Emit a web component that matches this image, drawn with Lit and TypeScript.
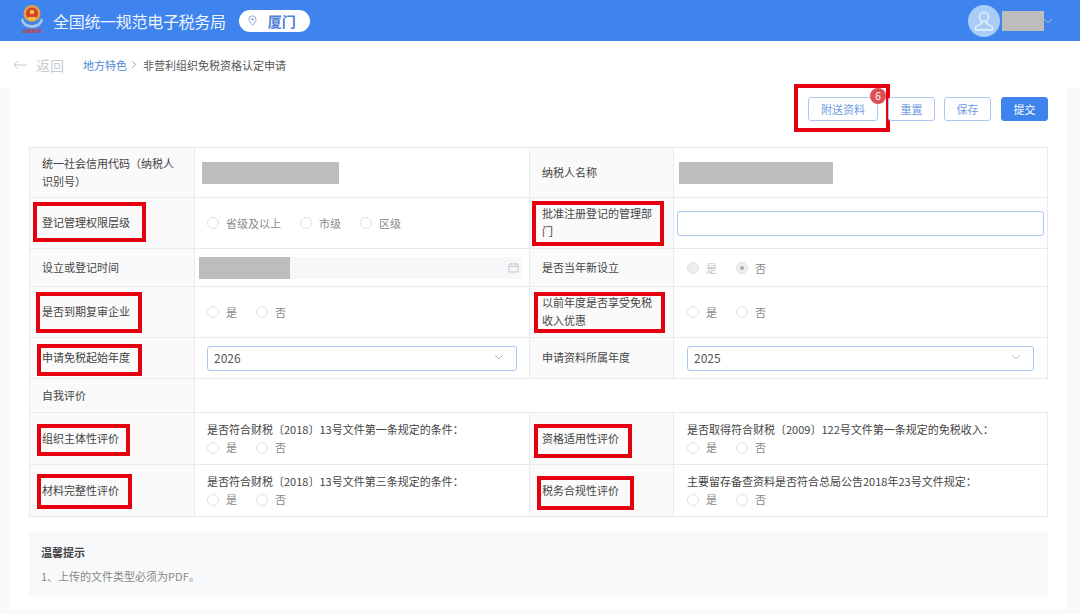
import { LitElement, html, css, nothing } from 'lit';
import { customElement } from 'lit/decorators.js';

// red annotation box, offsets are relative to the label cell
type Mark = { l: number; t: number; w: number; h: number };

const radios = (names: string[], checked = -1, disabled = false) => html`
  <div class="radios ${disabled ? 'disabled' : ''}">
    ${names.map((n, i) => html`
      <span class="radio"><i class="dot ${i === checked ? 'on' : ''}"></i>${n}</span>
    `)}
  </div>
`;

const chevron = html`<svg class="chev" width="10" height="6" viewBox="0 0 10 6"><path d="M1 1l4 4 4-4" fill="none" stroke="#b4bac4" stroke-width="1"/></svg>`;

const select = (v: string) => html`<div class="field select"><span>${v}</span>${chevron}</div>`;

const question = (q: string) => html`<div class="q"><div>${q}</div>${radios(['是', '否'])}</div>`;

const label = (text: string, mark?: Mark) => html`
  <div class="label">
    <span>${text}</span>
    ${mark ? html`<b class="mark" style="left:${mark.l}px;top:${mark.t}px;width:${mark.w}px;height:${mark.h}px"></b>` : nothing}
  </div>
`;

@customElement('app-root')
export class AppRoot extends LitElement {
  static styles = css`
    :host {
      display: block;
      height: 614px;
      overflow: hidden;
      background: #f8f9fa;
      font-family: "Noto Sans CJK SC", "Liberation Sans", sans-serif;
      font-size: 11px;
      color: #444;
    }

    .top {
      height: 41px;
      background: #3f84ee;
      display: flex;
      align-items: center;
      padding: 0 27px 0 21px;
      color: #fff;
    }
    .logo { display: block; margin: 0 10px 6px 0; }
    .title { font-size: 16px; color: #eef4fe; letter-spacing: -0.3px; }
    .city {
      margin-left: 13px;
      width: 71px;
      height: 22px;
      border-radius: 11px;
      background: #fff;
      display: flex;
      align-items: center;
      padding-left: 9px;
      box-sizing: border-box;
      gap: 11px;
      color: #4f7fd6;
      font-size: 14px;
      font-weight: 700;
    }
    .user { margin-left: auto; display: flex; align-items: center; }
    .name { width: 42px; height: 20px; background: #bdbdbd; margin-left: 2px; }
    .user .chev { margin-left: -1px; }

    .crumbs {
      height: 47px;
      background: #fff;
      display: flex;
      align-items: center;
      padding-left: 13px;
    }
    .back { display: flex; align-items: center; gap: 9px; font-size: 14px; color: #c8ccd2; width: 70px; }
    .crumbs a { color: #4f86d8; }
    .crumbs .sep { margin: 0 7px 0 5px; }
    .crumbs .cur { color: #555; }

    .card {
      margin: 0 13px 0 10px;
      height: 522px;
      background: #fff;
      box-sizing: border-box;
      padding: 9px 19px 0;
    }

    .bar { display: flex; justify-content: flex-end; gap: 9px; height: 50px; }
    .btn {
      position: relative;
      height: 24px;
      width: 47px;
      box-sizing: border-box;
      border: 1px solid #a9c8f2;
      border-radius: 3px;
      display: flex;
      align-items: center;
      justify-content: center;
      color: #6c9be0;
      background: #fff;
      font-size: 11px;
    }
    .btn.wide { width: 70px; margin-right: 1px; }
    .btn.primary { background: #3f84ee; border-color: #3f84ee; color: #fff; margin-left: 1px; }
    .badge {
      position: absolute;
      z-index: 1;
      right: -9px;
      top: -10px;
      width: 16px;
      height: 16px;
      border-radius: 50%;
      background: #dc4f55;
      color: #fff;
      font-size: 10px;
      line-height: 16px;
      text-align: center;
    }
    .bar .mark { left: -15px; top: -14px; width: 96px; height: 48px; }

    .grid {
      display: grid;
      grid-template-columns: 165px 335px 144px 374px;
      grid-template-rows: 50px 51px 38px 51px 41px 34px 52px 52px;
      border-top: 1px solid #e8eaed;
      border-left: 1px solid #e8eaed;
    }
    .grid > * {
      border-right: 1px solid #e8eaed;
      border-bottom: 1px solid #e8eaed;
      box-sizing: border-box;
      min-width: 0;
    }
    .label {
      position: relative;
      background: #fafafa;
      display: flex;
      align-items: center;
      padding: 0 12px 2px;
      line-height: 18px;
      color: #444;
    }
    .cell { display: flex; align-items: center; padding: 0 12px; }
    .cell.r { padding: 0 13px; }
    .cell.wide { grid-column: span 3; border-right: none; }
    .cell.date-cell { padding: 0 7px 0 4px; }
    .cell.input-cell { padding: 0 3px; }
    .mark {
      position: absolute;
      box-sizing: border-box;
      border: 4px solid #e4000f;
      pointer-events: none;
    }
    .mask { background: #bdbdbd; height: 22px; }
    .mask.code { width: 137px; margin-left: -5px; }
    .mask.taxpayer { width: 154px; margin-left: -8px; }
    .mask.when { width: 91px; }
    .field {
      box-sizing: border-box;
      height: 25px;
      border: 1px solid #a9c8f2;
      border-radius: 3px;
      background: #fff;
      width: 100%;
    }
    .select {
      display: flex;
      align-items: center;
      justify-content: space-between;
      padding: 0 12px 2px 6px;
      font-size: 12px;
      color: #555;
    }
    .date {
      flex: 1;
      height: 22px;
      background: #f6f7f9;
      border-radius: 3px;
      display: flex;
      align-items: center;
      justify-content: space-between;
      padding-right: 3px;
    }

    .radios { display: flex; gap: 19px; color: #8a8a8a; }
    .radio { display: inline-flex; align-items: center; gap: 7px; }
    .dot {
      width: 12px;
      height: 12px;
      border: 1px solid #dfe2e6;
      border-radius: 50%;
      box-sizing: border-box;
      background: #fff;
      position: relative;
    }
    .disabled .dot { background: #eceef0; }
    .disabled .dot.on::after {
      content: '';
      position: absolute;
      left: 3px;
      top: 3px;
      width: 4px;
      height: 4px;
      border-radius: 50%;
      background: #a8a8a8;
    }
    .disabled .radio:first-child { color: #c4c4c4; }
    .q { line-height: 17px; color: #444; }
    .q .radios { margin-top: 1px; }

    .tips {
      margin-top: 15px;
      height: 65px;
      background: #f7f9fb;
      padding: 12px 12px 0;
      box-sizing: border-box;
      line-height: 17px;
    }
    .tips b { display: block; font-weight: 700; color: #444; margin-bottom: 7px; }
    .tips span { color: #888; }
  `;

  render() {
    return html`
      <header class="top">
        <svg class="logo" width="22" height="30" viewBox="0 0 22 30">
          <path d="M2 15c1 5 5 7 9 7s8-2 9-7l2 2c-1 5-6 8-11 8S1 22 0 17z" fill="#a9c6e6"/>
          <circle cx="11" cy="10.500" r="8.500" fill="#dfa24c"/>
          <circle cx="11" cy="10.500" r="6" fill="#d8402c"/>
          <circle cx="11" cy="9" r="2.200" fill="#f0c24e"/>
          <path d="M7 14h8l-1 3H8z" fill="#f0c24e"/>
          <text x="11" y="29.500" text-anchor="middle" font-size="5" font-weight="700" fill="#c8402e">中国税务</text>
        </svg>
        <span class="title">全国统一规范电子税务局</span>
        <div class="city">
          <svg width="9" height="11" viewBox="0 0 9 11"><path d="M4.500 10.300C2.600 8 1 6.200 1 4.300a3.500 3.500 0 0 1 7 0c0 1.900-1.600 3.700-3.500 6z" fill="none" stroke="#8fa8d4"/><circle cx="4.500" cy="4.300" r="1.200" fill="#8fa8d4"/></svg>
          <span>厦门</span>
        </div>
        <div class="user">
          <svg width="32" height="32" viewBox="0 0 32 32">
            <circle cx="16" cy="16" r="16" fill="#a9cdf7"/>
            <circle cx="16" cy="12" r="4.500" fill="none" stroke="#eaf3fe" stroke-width="1.300"/>
            <path d="M13.500 16.500v2L8.500 21c-1 .5-1 2.500-1 4h17c0-1.500 0-3.500-1-4l-5-2.500v-2" fill="none" stroke="#eaf3fe" stroke-width="1.300"/>
          </svg>
          <div class="name"></div>
          ${chevron}
        </div>
      </header>

      <nav class="crumbs">
        <div class="back">
          <svg width="14" height="10" viewBox="0 0 14 10"><path d="M14 5H1M5 1L1 5l4 4" fill="none" stroke="#c8ccd2" stroke-width="1"/></svg>
          <span>返回</span>
        </div>
        <a>地方特色</a>
        <svg class="sep" width="4" height="7" viewBox="0 0 4 7"><path d="M.5.500l3 3-3 3" fill="none" stroke="#999"/></svg>
        <span class="cur">非营利组织免税资格认定申请</span>
      </nav>

      <main class="card">
        <div class="bar">
          <div class="btn wide">附送资料<b class="mark"></b><span class="badge">6</span></div>
          <div class="btn">重置</div>
          <div class="btn">保存</div>
          <div class="btn primary">提交</div>
        </div>

        <div class="grid">
          ${label('统一社会信用代码（纳税人识别号）')}
          <div class="cell"><div class="mask code"></div></div>
          ${label('纳税人名称')}
          <div class="cell r"><div class="mask taxpayer"></div></div>

          ${label('登记管理权限层级', { l: 3, t: 4, w: 113, h: 40 })}
          <div class="cell">${radios(['省级及以上', '市级', '区级'])}</div>
          ${label('批准注册登记的管理部门', { l: 2, t: 3, w: 132, h: 45 })}
          <div class="cell input-cell"><div class="field"></div></div>

          ${label('设立或登记时间')}
          <div class="cell date-cell">
            <div class="date">
              <div class="mask when"></div>
              <svg width="11" height="11" viewBox="0 0 11 11"><path d="M1 2h9v8H1zM1 4.500h9M3.500 1v2M7.500 1v2" fill="none" stroke="#c4c8ce"/></svg>
            </div>
          </div>
          ${label('是否当年新设立')}
          <div class="cell r">${radios(['是', '否'], 1, true)}</div>

          ${label('是否到期复审企业', { l: 6, t: 5, w: 106, h: 41 })}
          <div class="cell">${radios(['是', '否'])}</div>
          ${label('以前年度是否享受免税收入优惠', { l: 4, t: 5, w: 131, h: 41 })}
          <div class="cell r">${radios(['是', '否'])}</div>

          ${label('申请免税起始年度', { l: 7, t: 6, w: 105, h: 32 })}
          <div class="cell">${select('2026')}</div>
          ${label('申请资料所属年度')}
          <div class="cell r">${select('2025')}</div>

          ${label('自我评价')}
          <div class="cell wide"></div>

          ${label('组织主体性评价', { l: 7, t: 11, w: 93, h: 32 })}
          <div class="cell">${question('是否符合财税〔2018〕13号文件第一条规定的条件：')}</div>
          ${label('资格适用性评价', { l: 4, t: 11, w: 98, h: 34 })}
          <div class="cell r">${question('是否取得符合财税〔2009〕122号文件第一条规定的免税收入：')}</div>

          ${label('材料完整性评价', { l: 7, t: 9, w: 95, h: 35 })}
          <div class="cell">${question('是否符合财税〔2018〕13号文件第三条规定的条件：')}</div>
          ${label('税务合规性评价', { l: 7, t: 11, w: 97, h: 34 })}
          <div class="cell r">${question('主要留存备查资料是否符合总局公告2018年23号文件规定：')}</div>
        </div>

        <section class="tips">
          <b>温馨提示</b>
          <span>1、上传的文件类型必须为PDF。</span>
        </section>
      </main>
    `;
  }
}
